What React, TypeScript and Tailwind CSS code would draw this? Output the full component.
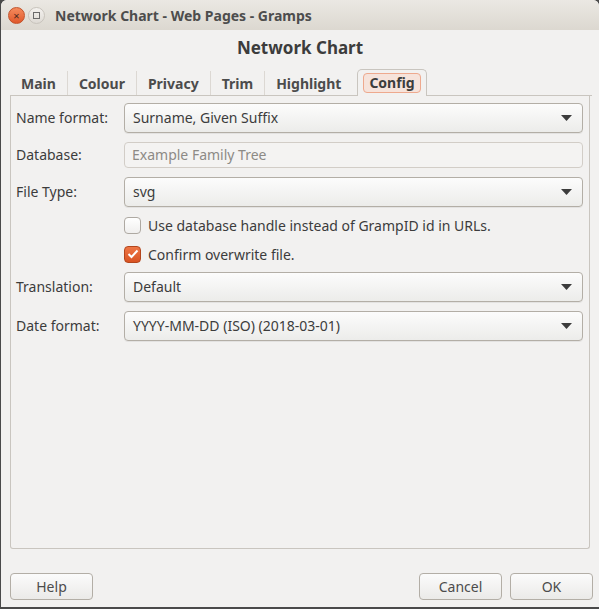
import React from "react";

const FONT = { fontFamily: '"Noto Sans", "Open Sans", sans-serif' };

const TABS = ["Main", "Colour", "Privacy", "Trim", "Highlight"];

function Arrow() {
  return (
    <svg width="11" height="6" viewBox="0 0 11 6" className="shrink-0">
      <path d="M0 0 H11 L5.5 6 Z" fill="#3c3c3c" />
    </svg>
  );
}

function Combo({ value }: { value: string }) {
  return (
    <div className="flex h-[30px] flex-1 items-center justify-between rounded-[4px] border border-[#b3aea6] bg-gradient-to-b from-[#fcfcfc] to-[#ececea] pl-[8px] pr-[10px] text-[#3c3c3c] shadow-[0_1px_0_rgba(0,0,0,0.06)]">
      <span>{value}</span>
      <Arrow />
    </div>
  );
}

function Row({ label, children }: { label: string; children: React.ReactNode }) {
  return (
    <div className="flex items-center">
      <span className="w-[108px] text-[#3c3c3c]">{label}</span>
      {children}
    </div>
  );
}

function Check({ checked, label }: { checked?: boolean; label: string }) {
  return (
    <div className="flex items-center gap-[7px] pl-[108px]">
      {checked ? (
        <span className="flex h-[17px] w-[17px] items-center justify-center rounded-[4px] border border-[#b3461d] bg-gradient-to-b from-[#ee7645] to-[#d95322]">
          <svg width="12" height="10" viewBox="0 0 12 10">
            <path d="M1.5 5 L4.5 8 L10.5 1.5" fill="none" stroke="#fff" strokeWidth="2" />
          </svg>
        </span>
      ) : (
        <span className="h-[17px] w-[17px] rounded-[4px] border border-[#aea9a2] bg-gradient-to-b from-white to-[#f0efee]" />
      )}
      <span className="text-[#3c3c3c]">{label}</span>
    </div>
  );
}

function Button({ label, className }: { label: string; className?: string }) {
  return (
    <div
      className={`flex h-[27px] w-[83px] items-center justify-center rounded-[4px] border border-[#b3aea6] bg-gradient-to-b from-[#fbfbfb] to-[#ebeae8] text-[#4c4c4c] ${className ?? ""}`}
    >
      {label}
    </div>
  );
}

export default function App() {
  return (
    <div className="h-[609px] w-[599px] overflow-hidden bg-[#4a4a4a] text-[14px]" style={FONT}>
      <div className="ml-[1px] flex h-[607px] flex-col overflow-hidden rounded-t-[6px] bg-[#f2f1f0]">
        {/* title bar */}
        <div className="flex h-[30px] items-center bg-gradient-to-b from-[#ebe8e3] to-[#dcd8d0] pl-[7px]">
          <span className="flex h-[17px] w-[17px] items-center justify-center rounded-full border border-[#c2522a] bg-gradient-to-b from-[#f58b5d] to-[#e0572a] text-[11px] leading-none text-[#4a2a1f]">
            ×
          </span>
          <span className="ml-[3px] flex h-[17px] w-[17px] items-center justify-center rounded-full border border-[#c8c3bc] bg-gradient-to-b from-[#f4f2ef] to-[#dedad4]">
            <span className="h-[7px] w-[7px] border border-[#6a6a6a]" />
          </span>
          <span className="ml-[10px] font-bold text-[#4d4d4d]">
            Network Chart - Web Pages - Gramps
          </span>
        </div>

        {/* heading */}
        <div className="pt-[5px] text-center text-[17px] font-bold text-[#3c3c3c]">
          Network Chart
        </div>

        {/* tabs */}
        <div className="mt-[9px] flex h-[26px] items-end pl-[9px] pr-[7px]">
          <div className="flex h-[25px] flex-1 items-stretch border-b border-[#c9c5bf]">
            {TABS.map((t, i) => (
              <div
                key={t}
                className={`flex items-center px-[11px] pt-[2px] font-bold text-[#4c4c4c] ${
                  i < TABS.length - 1 ? "border-r border-[#dcd8d3]" : ""
                }`}
              >
                {t}
              </div>
            ))}
            <div className="relative -mb-[1px] -mt-[2px] ml-[5px] flex items-center rounded-t-[5px] border border-b-0 border-[#c9c5bf] bg-[#f2f1f0] px-[5px] pt-[1px]">
              <span className="rounded-[4px] border border-[#eea98e] bg-[#f6e3db] px-[5px] font-bold leading-[18px] text-[#3c3c3c]">
                Config
              </span>
            </div>
            <div className="flex-1" />
          </div>
        </div>

        {/* notebook page */}
        <div className="mx-[9px] flex h-[453px] flex-col rounded-b-[3px] border border-t-0 border-[#c9c5bf] pl-[5px] pr-[6px] pt-[7px]">
          <Row label="Name format:">
            <Combo value="Surname, Given Suffix" />
          </Row>
          <div className="mt-[9px]">
            <Row label="Database:">
              <div className="flex h-[26px] flex-1 items-center rounded-[4px] border border-[#d2cdc7] bg-[#f4f3f2] pl-[7px] text-[#8d8a86]">
                Example Family Tree
              </div>
            </Row>
          </div>
          <div className="mt-[9px]">
            <Row label="File Type:">
              <Combo value="svg" />
            </Row>
          </div>
          <div className="mt-[8px]">
            <Check label="Use database handle instead of GrampID id in URLs." />
          </div>
          <div className="mt-[8px]">
            <Check checked label="Confirm overwrite file." />
          </div>
          <div className="mt-[7px]">
            <Row label="Translation:">
              <Combo value="Default" />
            </Row>
          </div>
          <div className="mt-[9px]">
            <Row label="Date format:">
              <Combo value="YYYY-MM-DD (ISO) (2018-03-01)" />
            </Row>
          </div>
        </div>

        {/* buttons */}
        <div className="mt-[24px] flex pl-[9px] pr-[6px]">
          <Button label="Help" />
          <div className="flex-1" />
          <Button label="Cancel" />
          <Button label="OK" className="ml-[8px]" />
        </div>
      </div>
    </div>
  );
}
